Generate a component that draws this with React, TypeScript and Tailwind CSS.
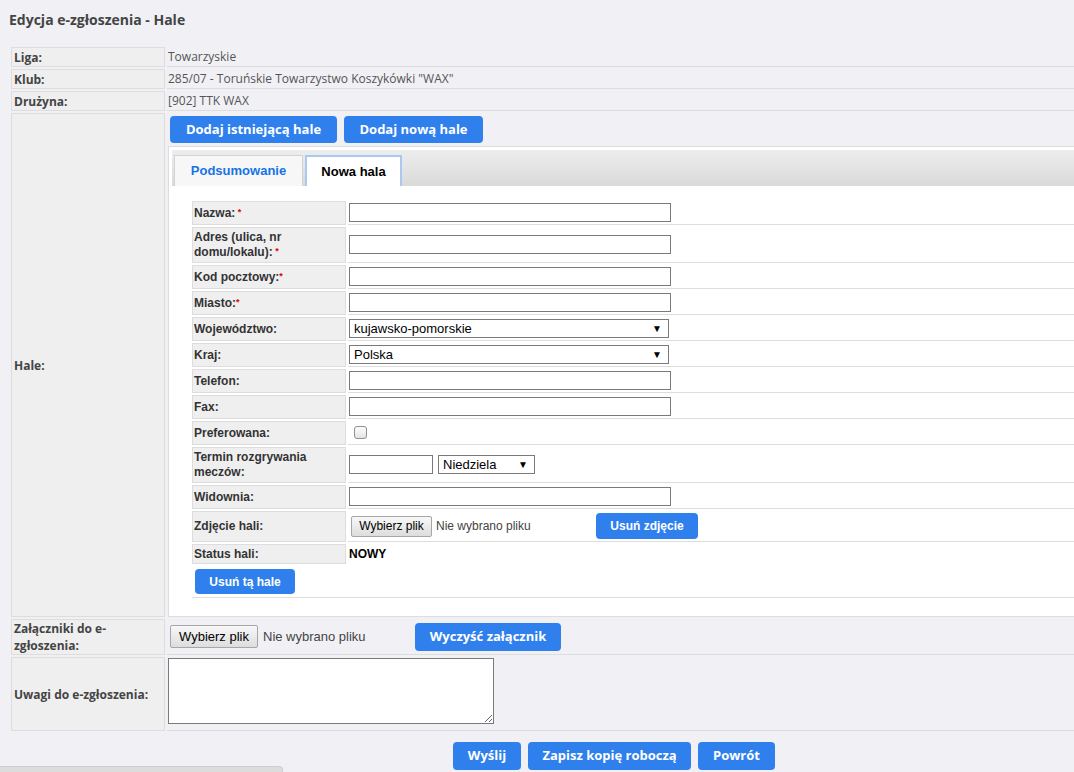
import React from "react";

function Req({ space }: { space?: boolean }) {
  return (
    <span className="text-[#e00000] text-[9px] align-top leading-[12px]">
      {space ? "\u00a0*" : "*"}
    </span>
  );
}

function OuterLabel({ children, h }: { children: React.ReactNode; h: string }) {
  return (
    <td
      className={`w-[154px] ${h} bg-[#efefef] border border-[#dddddd] pl-[2px] pr-[2px] py-0 align-middle font-['Open_Sans',sans-serif] text-[12px] font-bold text-[#444444] leading-[17px]`}
    >
      {children}
    </td>
  );
}

function InnerLabel({ children, h }: { children: React.ReactNode; h: string }) {
  return (
    <td
      className={`w-[154px] ${h} bg-[#efefef] border border-[#dddddd] pl-[1px] pr-[2px] py-0 align-middle font-['Liberation_Sans',Arial,sans-serif] text-[12px] font-bold text-[#333333] leading-[15px]`}
    >
      {children}
    </td>
  );
}

function TextInput({ w = "w-[322px]" }: { w?: string }) {
  return <input type="text" className={`block ${w} h-[19px] border border-[#7a7a7a] bg-white outline-none`} />;
}

function FakeSelect({ value, w }: { value: string; w: string }) {
  return (
    <div
      className={`${w} h-[19px] border border-[#7a7a7a] bg-white flex items-center justify-between pl-[4px] pr-[6px] font-['Liberation_Sans',Arial,sans-serif] text-[13px] text-black leading-[17px]`}
    >
      <span>{value}</span>
      <span className="text-[10px] leading-[10px]">▼</span>
    </div>
  );
}

function FileButton({ small }: { small?: boolean }) {
  return (
    <div
      className={`${
        small ? "w-[81px] h-[21px] text-[12px]" : "w-[88px] h-[23px] text-[13px]"
      } flex items-center justify-center border border-[#a6a6a6] rounded-[2px] bg-linear-to-b from-[#f8f8f8] to-[#dddddd] font-['Liberation_Sans',Arial,sans-serif] text-black`}
    >
      Wybierz plik
    </div>
  );
}

function BlueBtn({ children, cls }: { children: React.ReactNode; cls: string }) {
  return (
    <div
      className={`${cls} flex items-center justify-center rounded-[4px] bg-[#2f80ed] text-white font-bold whitespace-nowrap`}
    >
      {children}
    </div>
  );
}

const valueCell = "border-b border-[#dddddd] p-0 align-middle";

export default function App() {
  return (
    <div className="relative w-[1074px] h-[772px] overflow-hidden bg-[#f1f1f5]">
      <div className="pt-[10px] pl-[9px] font-['Open_Sans',sans-serif] text-[14px] font-bold leading-[20px] text-[#444444]">
        Edycja e-zgłoszenia - Hale
      </div>

      <table className="mt-[15px] ml-[9px] w-[1208px] border-separate border-spacing-[2px]">
        <tbody>
          <tr>
            <OuterLabel h="h-[20px]">Liga:</OuterLabel>
            <td className={`${valueCell} pl-[1px] font-['Open_Sans',sans-serif] text-[12px] text-[#555555]`}>Towarzyskie</td>
          </tr>
          <tr>
            <OuterLabel h="h-[20px]">Klub:</OuterLabel>
            <td className={`${valueCell} pl-[1px] font-['Open_Sans',sans-serif] text-[12px] text-[#555555]`}>
              285/07 - Toruńskie Towarzystwo Koszykówki "WAX"
            </td>
          </tr>
          <tr>
            <OuterLabel h="h-[20px]">Drużyna:</OuterLabel>
            <td className={`${valueCell} pl-[1px] font-['Open_Sans',sans-serif] text-[12px] text-[#555555]`}>[902] TTK WAX</td>
          </tr>
          <tr>
            <OuterLabel h="h-[504px]">Hale:</OuterLabel>
            <td className="p-0 align-top">
              <div className="flex gap-[7px] pl-[3px] pt-[3px] font-['Open_Sans',sans-serif] text-[13px]">
                <BlueBtn cls="w-[167px] h-[27px]">Dodaj istniejącą hale</BlueBtn>
                <BlueBtn cls="w-[139px] h-[27px]">Dodaj nową hale</BlueBtn>
              </div>
              <div className="mt-[3px] ml-[1px] border border-[#dddddd] bg-white p-[3px]">
                <div className="h-[36px] bg-linear-to-b from-[#ededed] to-[#dadada] flex items-end pl-[2px] gap-[2px] font-['Liberation_Sans',Arial,sans-serif] text-[13px] font-bold">
                  <div className="w-[129px] h-[31px] border border-b-0 border-[#d3d3d3] bg-[#f7f7f7] flex items-center justify-center text-[#1673e6]">
                    Podsumowanie
                  </div>
                  <div className="w-[97px] h-[31px] border-2 border-b-0 border-[#a9c8f2] bg-white flex items-center justify-center text-black">
                    Nowa hala
                  </div>
                </div>
                <div className="pl-[18px] pt-[13px] pb-[13px]">
                  <table className="w-full border-separate border-spacing-[2px]">
                    <tbody>
                      <tr>
                        <InnerLabel h="h-[24px]">
                          Nazwa:<Req space />
                        </InnerLabel>
                        <td className={`${valueCell} pl-[1px]`}>
                          <TextInput />
                        </td>
                      </tr>
                      <tr>
                        <InnerLabel h="h-[36px]">
                          Adres (ulica, nr
                          <br />
                          domu/lokalu):<Req space />
                        </InnerLabel>
                        <td className={`${valueCell} pl-[1px]`}>
                          <TextInput />
                        </td>
                      </tr>
                      <tr>
                        <InnerLabel h="h-[24px]">
                          Kod pocztowy:<Req />
                        </InnerLabel>
                        <td className={`${valueCell} pl-[1px]`}>
                          <TextInput />
                        </td>
                      </tr>
                      <tr>
                        <InnerLabel h="h-[24px]">
                          Miasto:<Req />
                        </InnerLabel>
                        <td className={`${valueCell} pl-[1px]`}>
                          <TextInput />
                        </td>
                      </tr>
                      <tr>
                        <InnerLabel h="h-[24px]">Województwo:</InnerLabel>
                        <td className={`${valueCell} pl-[1px]`}>
                          <FakeSelect value="kujawsko-pomorskie" w="w-[320px]" />
                        </td>
                      </tr>
                      <tr>
                        <InnerLabel h="h-[24px]">Kraj:</InnerLabel>
                        <td className={`${valueCell} pl-[1px]`}>
                          <FakeSelect value="Polska" w="w-[320px]" />
                        </td>
                      </tr>
                      <tr>
                        <InnerLabel h="h-[24px]">Telefon:</InnerLabel>
                        <td className={`${valueCell} pl-[1px]`}>
                          <TextInput />
                        </td>
                      </tr>
                      <tr>
                        <InnerLabel h="h-[24px]">Fax:</InnerLabel>
                        <td className={`${valueCell} pl-[1px]`}>
                          <TextInput />
                        </td>
                      </tr>
                      <tr>
                        <InnerLabel h="h-[24px]">Preferowana:</InnerLabel>
                        <td className={`${valueCell} pl-[1px]`}>
                          <div className="ml-[5px] w-[13px] h-[13px] rounded-[3px] border border-[#909090] bg-linear-to-b from-[#fdfdfd] to-[#e4e4e4]" />
                        </td>
                      </tr>
                      <tr>
                        <InnerLabel h="h-[36px]">
                          Termin rozgrywania
                          <br />
                          meczów:
                        </InnerLabel>
                        <td className={`${valueCell} pl-[1px]`}>
                          <div className="flex items-center gap-[5px]">
                            <TextInput w="w-[84px]" />
                            <FakeSelect value="Niedziela" w="w-[97px]" />
                          </div>
                        </td>
                      </tr>
                      <tr>
                        <InnerLabel h="h-[24px]">Widownia:</InnerLabel>
                        <td className={`${valueCell} pl-[1px]`}>
                          <TextInput />
                        </td>
                      </tr>
                      <tr>
                        <InnerLabel h="h-[31px]">Zdjęcie hali:</InnerLabel>
                        <td className={`${valueCell} pl-[3px]`}>
                          <div className="flex items-center">
                            <div className="w-[245px] flex items-center gap-[4px]">
                              <FileButton small />
                              <span className="font-['Liberation_Sans',Arial,sans-serif] text-[12px] text-[#444444]">
                                Nie wybrano pliku
                              </span>
                            </div>
                            <BlueBtn cls="w-[102px] h-[26px] font-['Liberation_Sans',Arial,sans-serif] text-[12px]">
                              Usuń zdjęcie
                            </BlueBtn>
                          </div>
                        </td>
                      </tr>
                      <tr>
                        <InnerLabel h="h-[20px]">Status hali:</InnerLabel>
                        <td className="p-0 pl-[1px] align-middle font-['Liberation_Sans',Arial,sans-serif] text-[12px] font-bold text-black">
                          NOWY
                        </td>
                      </tr>
                      <tr>
                        <td colSpan={2} className="h-[32px] border-b border-[#dddddd] p-0 pl-[3px] align-middle">
                          <BlueBtn cls="w-[100px] h-[25px] font-['Liberation_Sans',Arial,sans-serif] text-[12px]">
                            Usuń tą hale
                          </BlueBtn>
                        </td>
                      </tr>
                    </tbody>
                  </table>
                </div>
              </div>
            </td>
          </tr>
          <tr>
            <OuterLabel h="h-[36px]">
              Załączniki do e-
              <br />
              zgłoszenia:
            </OuterLabel>
            <td className={`${valueCell} pl-[3px]`}>
              <div className="flex items-center">
                <div className="w-[245px] flex items-center gap-[5px]">
                  <FileButton />
                  <span className="font-['Liberation_Sans',Arial,sans-serif] text-[13px] text-[#444444]">
                    Nie wybrano pliku
                  </span>
                </div>
                <BlueBtn cls="w-[146px] h-[28px] font-['Open_Sans',sans-serif] text-[13px]">Wyczyść załącznik</BlueBtn>
              </div>
            </td>
          </tr>
          <tr>
            <OuterLabel h="h-[74px]">Uwagi do e-zgłoszenia:</OuterLabel>
            <td className="border-b border-[#dddddd] p-0 pl-[1px] pt-[1px] align-top">
              <textarea className="block w-[326px] h-[66px] border border-[#7a7a7a] bg-white outline-none" />
            </td>
          </tr>
        </tbody>
      </table>

      <div className="ml-[9px] mt-[9px] w-[1210px] flex justify-center gap-[7px] font-['Open_Sans',sans-serif] text-[13px]">
        <BlueBtn cls="w-[68px] h-[28px]">Wyślij</BlueBtn>
        <BlueBtn cls="w-[163px] h-[28px]">Zapisz kopię roboczą</BlueBtn>
        <BlueBtn cls="w-[77px] h-[28px]">Powrót</BlueBtn>
      </div>

      <div className="absolute left-0 bottom-0 w-[283px] h-[6px] rounded-tr-[4px] bg-[#dcdcdc] border-t border-r border-[#cfcfcf]" />
    </div>
  );
}
